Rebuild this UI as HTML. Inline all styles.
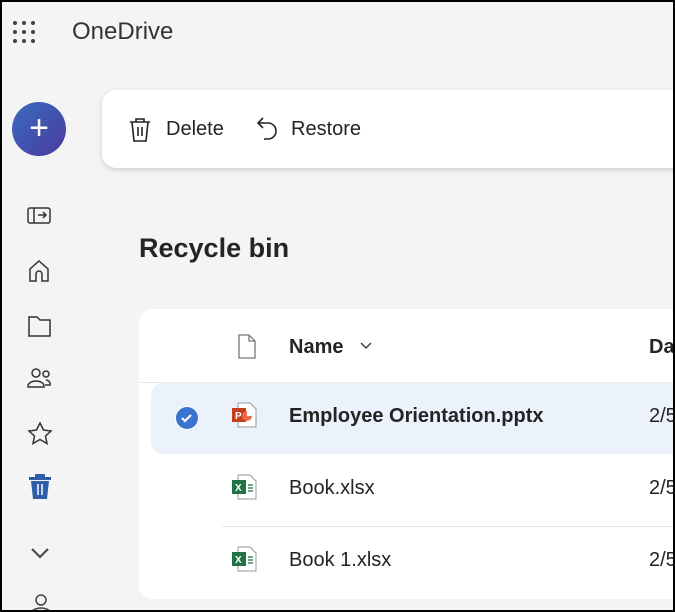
<!DOCTYPE html>
<html><head><style>
body{margin:0;width:675px;height:612px;overflow:hidden;font-family:"Liberation Sans",sans-serif;}
.frame{position:absolute;left:0;top:0;width:671px;height:608px;border:2px solid #000;background:#f4f4f5;overflow:hidden}
.abs{position:absolute}
.t{color:#242424}
</style></head><body>
<div class="frame">
<svg class="abs" style="left:9px;top:18px" width="28" height="26" viewBox="0 0 28 26"><g fill="#444">
<circle cx="4" cy="3" r="2"/><circle cx="13" cy="3" r="2"/><circle cx="22" cy="3" r="2"/>
<circle cx="4" cy="12" r="2"/><circle cx="13" cy="12" r="2"/><circle cx="22" cy="12" r="2"/>
<circle cx="4" cy="21" r="2"/><circle cx="13" cy="21" r="2"/><circle cx="22" cy="21" r="2"/></g></svg>
<div class="abs t" style="left:70px;top:16px;font-size:24px;color:#333">OneDrive</div>
<div class="abs" style="left:10px;top:100px;width:54px;height:54px;border-radius:50%;background:linear-gradient(135deg,#3a6cc0,#4a3a9e)"></div>
<div class="abs" style="left:10px;top:100px;width:54px;height:54px;color:#fff;font-size:34px;text-align:center;line-height:52px">+</div>
<div class="abs" style="left:100px;top:88px;width:600px;height:78px;background:#fff;border-radius:14px;box-shadow:0 2px 6px rgba(0,0,0,.15)"></div>
<svg class="abs" style="left:126px;top:115px" width="24" height="26" viewBox="0 0 24 26" fill="none" stroke="#222" stroke-width="1.6"><path d="M2 5h20M8 5V2h8v3M4 5l2 19h12l2-19M10 10v9M14 10v9"/></svg>
<div class="abs t" style="left:164px;top:116px;font-size:20px">Delete</div>
<svg class="abs" style="left:254px;top:114px" width="24" height="28" viewBox="0 0 24 28" fill="none" stroke="#222" stroke-width="1.6"><path d="M7 2L2 7l5 5M2 7h10a8 8 0 0 1 0 16H8"/></svg>
<div class="abs t" style="left:289px;top:116px;font-size:20px">Restore</div>
<svg class="abs" style="left:24px;top:202px" width="28" height="190" viewBox="0 0 28 190" fill="none" stroke="#333" stroke-width="1.5">
<rect x="2" y="4" width="22" height="15" rx="2"/><path d="M8 4v15M12 11h8M17 8l3 3-3 3"/>
<path d="M4 77V65l9-8 9 8v12h-6v-7a3 3 0 0 0-6 0v7z"/>
<path d="M3 113h8l3 3h10v16H3z"/>
<circle cx="10" cy="169" r="4"/><circle cx="20" cy="170" r="3"/><path d="M2 182a8 5 0 0 1 16 0v1H2zM20 176a5 4 0 0 1 4 5h-5"/>
</svg>
<svg class="abs" style="left:24px;top:419px" width="28" height="28" viewBox="0 0 28 28" fill="none" stroke="#333" stroke-width="1.5"><path d="M14 2l3.5 7 7.5 1-5.5 5 1.5 7.5-7-4-7 4 1.5-7.5-5.5-5 7.5-1z"/></svg>
<svg class="abs" style="left:26px;top:472px" width="24" height="26" viewBox="0 0 24 26"><path d="M1 3h22v3H1zM7 3V0h10v3M3 7h18l-2 18H5z" fill="#2f5ea8"/><path d="M10 10v11M14 10v11" stroke="#fff" stroke-width="1.5"/></svg>
<svg class="abs" style="left:28px;top:545px" width="20" height="12" viewBox="0 0 20 12" fill="none" stroke="#444" stroke-width="2"><path d="M2 2l8 8 8-8"/></svg>
<svg class="abs" style="left:27px;top:592px" width="24" height="20" viewBox="0 0 24 20" fill="none" stroke="#444" stroke-width="1.5"><circle cx="12" cy="6" r="5"/><path d="M2 20a10 6 0 0 1 20 0"/></svg>
<div class="abs t" style="left:137px;top:231px;font-size:27px;font-weight:bold;color:#242424">Recycle bin</div>
<div class="abs" style="left:137px;top:307px;width:560px;height:290px;background:#fff;border-radius:14px"></div>
<div class="abs" style="left:137px;top:380px;width:540px;height:1px;background:#e8e8e8"></div>
<div class="abs" style="left:149px;top:381px;width:540px;height:71px;background:#ebf2fb;border-radius:12px 0 0 12px"></div>
<div class="abs" style="left:220px;top:524px;width:460px;height:1px;background:#e8e8e8"></div>
<svg class="abs" style="left:234px;top:332px" width="22" height="26" viewBox="0 0 22 26" fill="none" stroke="#777" stroke-width="1.3"><path d="M3 1h10l6 6v17H3zM13 1v6h6"/></svg>
<div class="abs t" style="left:287px;top:334px;font-size:20px;font-weight:bold">Name</div>
<svg class="abs" style="left:357px;top:339px" width="14" height="10" viewBox="0 0 14 10" fill="none" stroke="#444" stroke-width="1.5"><path d="M2 2l5 5 5-5"/></svg>
<div class="abs t" style="left:647px;top:334px;font-size:20px;font-weight:bold">Da</div>
<div class="abs" style="left:173px;top:404px;width:22px;height:22px;border-radius:50%;background:#3b73d1;border:1px solid #fff"></div>
<svg class="abs" style="left:177px;top:408px" width="16" height="16" viewBox="0 0 16 16" fill="none" stroke="#fff" stroke-width="2.2"><path d="M3 8l3 3 6-6"/></svg>
<svg class="abs" style="left:229px;top:400px" width="26" height="26" viewBox="0 0 26 26"><path d="M7 1h12l6 6v18H7z" fill="#fff" stroke="#999"/><rect x="1" y="6" width="14" height="14" fill="#c43e1c"/><text x="4" y="17" font-size="10" font-weight="bold" fill="#fff" font-family="Liberation Sans">P</text><path d="M16 9a5 5 0 1 0 5 5h-5z" fill="#ed6c47"/></svg>
<div class="abs t" style="left:287px;top:403px;font-size:20px;font-weight:bold">Employee Orientation.pptx</div>
<div class="abs t" style="left:647px;top:403px;font-size:20px">2/5</div>
<svg class="abs" style="left:229px;top:472px" width="26" height="26" viewBox="0 0 26 26"><path d="M7 1h12l6 6v18H7z" fill="#fff" stroke="#999"/><rect x="1" y="6" width="14" height="14" fill="#217346"/><text x="4" y="17" font-size="10" font-weight="bold" fill="#fff" font-family="Liberation Sans">X</text><path d="M17 11h5M17 14h5M17 17h5" stroke="#217346" stroke-width="1.3"/></svg>
<div class="abs t" style="left:287px;top:475px;font-size:20px">Book.xlsx</div>
<div class="abs t" style="left:647px;top:475px;font-size:20px">2/5</div>
<svg class="abs" style="left:229px;top:544px" width="26" height="26" viewBox="0 0 26 26"><path d="M7 1h12l6 6v18H7z" fill="#fff" stroke="#999"/><rect x="1" y="6" width="14" height="14" fill="#217346"/><text x="4" y="17" font-size="10" font-weight="bold" fill="#fff" font-family="Liberation Sans">X</text><path d="M17 11h5M17 14h5M17 17h5" stroke="#217346" stroke-width="1.3"/></svg>
<div class="abs t" style="left:287px;top:547px;font-size:20px">Book 1.xlsx</div>
<div class="abs t" style="left:647px;top:547px;font-size:20px">2/5</div>
</div>
</body></html>
